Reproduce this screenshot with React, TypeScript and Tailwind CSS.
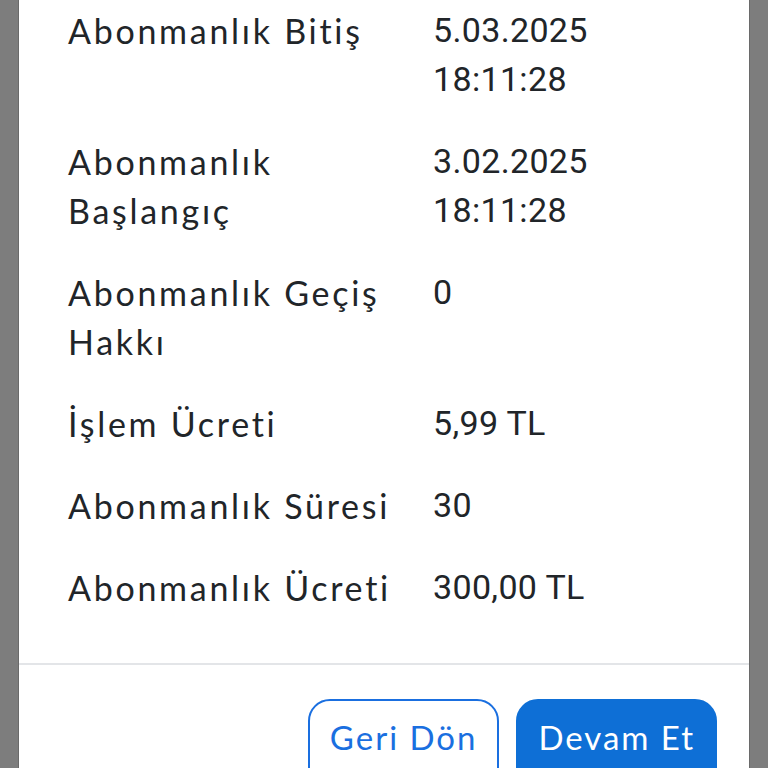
const rows: { label: string; value: string }[] = [
  { label: "Abonmanlık Bitiş", value: "5.03.2025 18:11:28" },
  { label: "Abonmanlık Başlangıç", value: "3.02.2025 18:11:28" },
  { label: "Abonmanlık Geçiş Hakkı", value: "0" },
  { label: "İşlem Ücreti", value: "5,99 TL" },
  { label: "Abonmanlık Süresi", value: "30" },
  { label: "Abonmanlık Ücreti", value: "300,00 TL" },
];

export default function App() {
  return (
    <div className="h-screen overflow-hidden bg-[#7d7d7d] px-[18px]">
      <div className="h-full bg-white border-x border-[#6a6a6a]">
        <div className="pt-[6px] pl-[49px] pr-[20px] flex flex-col gap-[33px] text-[#212529] text-[34px] leading-[49px]">
          {rows.map((r) => (
            <div key={r.label} className="grid grid-cols-[365px_1fr]">
              <div className="font-['Lato',sans-serif] tracking-[0.08em] pr-2">{r.label}</div>
              <div className="font-['Roboto',sans-serif] tracking-[0.01em] w-[160px]">{r.value}</div>
            </div>
          ))}
        </div>
        <div className="mt-[51px] border-t-2 border-[#e3e5e8]" />
        <div className="flex justify-end gap-[17px] pt-[34px] pr-[32px] font-['Lato',sans-serif] text-[33px] tracking-[0.06em]">
          <button className="h-[90px] px-[20px] rounded-[22px] border-2 border-[#1a6fe0] text-[#1a6fe0] pb-[12px]">
            Geri Dön
          </button>
          <button className="h-[90px] px-[20px] rounded-[22px] bg-[#0e6fd6] border-2 border-[#0e6fd6] text-white pb-[12px]">
            Devam Et
          </button>
        </div>
      </div>
    </div>
  );
}
